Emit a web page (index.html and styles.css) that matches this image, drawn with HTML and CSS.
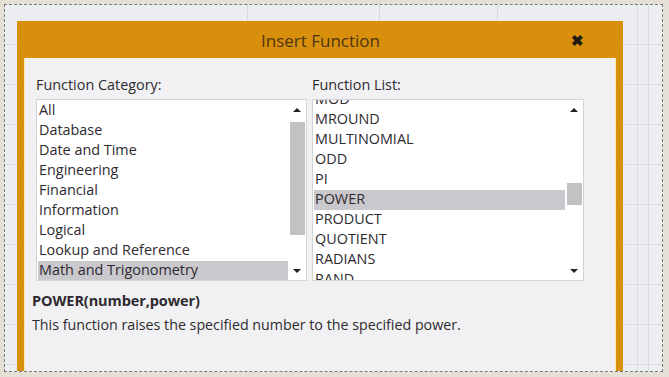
FILE: index.html
```html
<!DOCTYPE html>
<html lang="en">
<head>
  <meta charset="UTF-8" />
  <title>Insert Function</title>
  <link rel="stylesheet" href="styles.css">
</head>
<body>
  <div class="frame">
    <div class="dialog">
      <div class="title-bar">
        <span class="title">Insert Function</span>
        <span class="close">&#10006;</span>
      </div>
      <div class="panel">
        <div class="lists">
          <div class="group">
            <div class="label">Function Category:</div>
            <div class="listbox">
              <div class="items">
                <div class="item">All</div>
                <div class="item">Database</div>
                <div class="item">Date and Time</div>
                <div class="item">Engineering</div>
                <div class="item">Financial</div>
                <div class="item">Information</div>
                <div class="item">Logical</div>
                <div class="item">Lookup and Reference</div>
                <div class="item selected">Math and Trigonometry</div>
              </div>
              <div class="scrollbar">
                <span class="arrow up"></span>
                <div class="track"><div class="thumb thumb-cat"></div></div>
                <span class="arrow down"></span>
              </div>
            </div>
          </div>
          <div class="group">
            <div class="label">Function List:</div>
            <div class="listbox">
              <div class="items scrolled">
                <div class="item">MOD</div>
                <div class="item">MROUND</div>
                <div class="item">MULTINOMIAL</div>
                <div class="item">ODD</div>
                <div class="item">PI</div>
                <div class="item selected">POWER</div>
                <div class="item">PRODUCT</div>
                <div class="item">QUOTIENT</div>
                <div class="item">RADIANS</div>
                <div class="item">RAND</div>
              </div>
              <div class="scrollbar">
                <span class="arrow up"></span>
                <div class="track"><div class="thumb thumb-fn"></div></div>
                <span class="arrow down"></span>
              </div>
            </div>
          </div>
        </div>
        <div class="syntax">POWER(number,power)</div>
        <div class="desc">This function raises the specified number to the specified power.</div>
      </div>
    </div>
  </div>
</body>
</html>
```

FILE: styles.css
```css
body { margin: 0; background: #e4e0d5; font-family: "Open Sans", "Noto Sans", sans-serif; color: #2e2a30; }
.frame {
  margin: 4px 6px 0 4px; height: 366px; border: 1px dashed #7a7a7a; overflow: hidden;
  background-color: #eceef1;
  background-image:
    linear-gradient(90deg, transparent 242px, #d6d9dc 242px, #d6d9dc 243px, transparent 243px, transparent 374px, #d6d9dc 374px, #d6d9dc 375px, transparent 375px, transparent 492px, #d6d9dc 492px, #d6d9dc 493px, transparent 493px, transparent 632px, #dadde0 632px, #dadde0 633px, transparent 633px, transparent 643px, #dadde0 643px, #dadde0 644px, transparent 644px),
    repeating-linear-gradient(180deg, transparent 0, transparent 39px, #dadde0 39px, #dadde0 40px);
}
.dialog { margin: 16px 0 0 12px; width: 606px; height: 360px; background: #d88f0c; display: flex; flex-direction: column; }
.title-bar { height: 37px; display: flex; align-items: center; justify-content: center; position: relative; }
.title { font-size: 17px; color: #4f3512; margin-left: 1px; margin-top: 2px; }
.close { position: absolute; right: 39px; top: 9px; font-size: 15px; font-weight: bold; color: #1e1a14; }
.panel { flex: 1; margin: 0 7px; background: #f1f1f3; padding: 14px 12px 0 12px; box-shadow: inset 1px 0 0 #f7e6a8, inset -1px 0 0 #f7e6a8; }
.lists { display: flex; gap: 5px; }
.group { width: 271px; }
.group + .group { width: 272px; }
.label { font-size: 14.4px; height: 24px; padding-top: 3px; }
.listbox { height: 180px; border: 1px solid #d4d4d6; background: #fff; display: flex; overflow: hidden; }
.items { flex: 1; padding-left: 1px; padding-top: 1px; overflow: hidden; }
.items.scrolled { padding-top: 0; }
.items.scrolled .item:first-child { margin-top: -10px; }
.item { height: 20px; line-height: 18px; font-size: 14.4px; padding-left: 1px; white-space: nowrap; }
.item.selected { background: #c9c8cc; }
.scrollbar { width: 18px; display: flex; flex-direction: column; align-items: center; }
.arrow { width: 0; height: 0; border-left: 4px solid transparent; border-right: 4px solid transparent; margin: 8px 0 7px; }
.arrow.up { border-bottom: 4px solid #222; }
.arrow.down { border-top: 4px solid #222; }
.track { flex: 1; width: 15px; position: relative; }
.thumb { background: #c2c2c4; width: 15px; position: absolute; left: 0; }
.thumb-cat { top: 3px; height: 113px; }
.thumb-fn { top: 64px; height: 22px; }
.syntax { font-size: 14.5px; font-weight: bold; margin-top: 10px; margin-left: -4px; letter-spacing: -0.1px; }
.desc { font-size: 14.25px; margin-top: 5px; margin-left: -4px; }
```
